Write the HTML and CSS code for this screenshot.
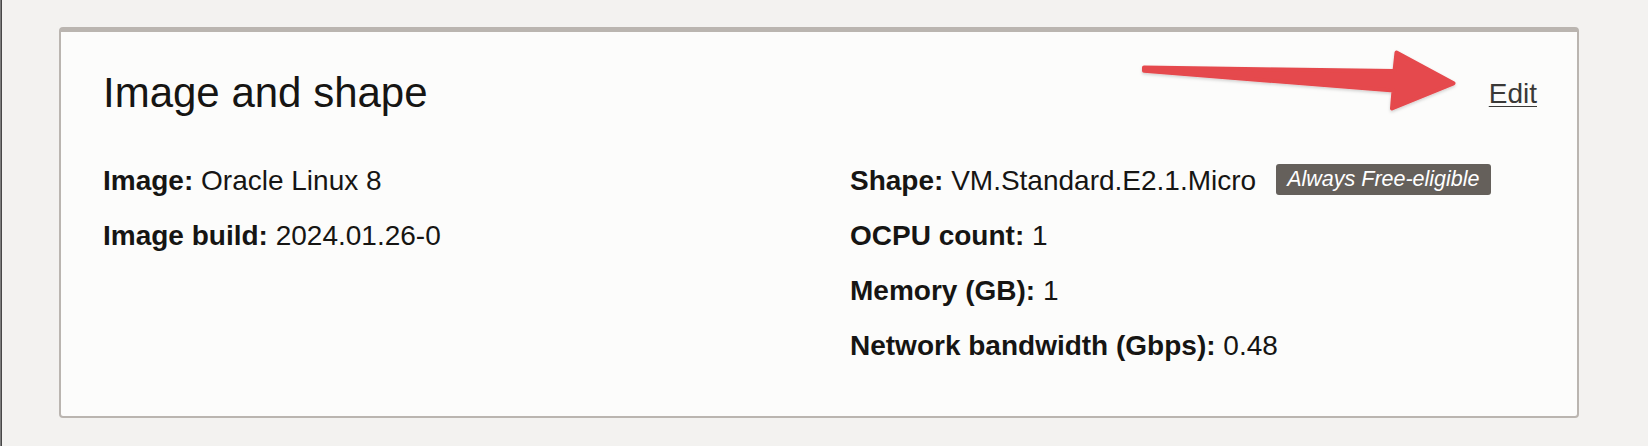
FILE: index.html
```html
<!DOCTYPE html>
<html lang="en">
<head>
<meta charset="utf-8">
<title>Image and shape</title>
<link rel="stylesheet" href="styles.css">
</head>
<body>
<div class="page">
  <section class="card">
    <header class="card-header">
      <h2 class="card-title">Image and shape</h2>
      <a class="edit-link" href="#">Edit</a>
    </header>
    <div class="details">
      <div class="col">
        <div class="row"><span class="label">Image:</span> Oracle Linux 8</div>
        <div class="row"><span class="label">Image build:</span> 2024.01.26-0</div>
      </div>
      <div class="col">
        <div class="row"><span class="label">Shape:</span>&nbsp;VM.Standard.E2.1.Micro<span class="badge">Always Free-eligible</span></div>
        <div class="row"><span class="label">OCPU count:</span> 1</div>
        <div class="row"><span class="label">Memory (GB):</span> 1</div>
        <div class="row"><span class="label">Network bandwidth (Gbps):</span> 0.48</div>
      </div>
    </div>
  </section>
  <svg class="arrow" viewBox="0 0 1648 446" width="1648" height="446" aria-hidden="true">
    <defs>
      <filter id="sh" x="-10%" y="-50%" width="120%" height="200%">
        <feDropShadow dx="0" dy="1.5" stdDeviation="1.5" flood-color="#000" flood-opacity="0.18"/>
      </filter>
    </defs>
    <path filter="url(#sh)" d="M1144,67.6 L1394.5,71 L1396.5,52.5 L1453.5,83.3 L1392,108.5 L1393.5,90.5 L1144,70.8 Z" fill="#e5494d" stroke="#e5494d" stroke-width="4" stroke-linejoin="round"/>
  </svg>
</div>
</body>
</html>
```
FILE: styles.css
```css
* { box-sizing: border-box; }

html, body {
  margin: 0;
  padding: 0;
}

body {
  background: #f3f2f0;
  font-family: "Liberation Sans", Arial, Helvetica, sans-serif;
  color: #161513;
}

.page {
  position: relative;
  width: 1648px;
  height: 446px;
  padding: 27px 0 0 59px;
  background: linear-gradient(to right, #7d7d7d 0, #7d7d7d 1px, #474747 1px, #474747 2px, #f3f2f0 2px);
}

.card {
  width: 1520px;
  height: 391px;
  background: #fcfcfb;
  border: 2px solid #bab5b0;
  border-top-width: 5px;
  border-radius: 4px;
  padding: 37px 40px 0 42px;
}

.card-header {
  display: flex;
  align-items: center;
  justify-content: space-between;
  height: 48px;
  margin-bottom: 48px;
}

.card-title {
  margin: 0;
  font-size: 42px;
  line-height: 48px;
  font-weight: 400;
  color: #161513;
}

.edit-link {
  font-size: 28px;
  line-height: 32px;
  color: #3a3937;
  text-decoration: underline;
  text-decoration-thickness: 1px;
  text-underline-offset: 3px;
  margin-top: 1px;
}

.details {
  display: grid;
  grid-template-columns: 1fr 1fr;
  column-gap: 60px;
}

.col {
  display: flex;
  flex-direction: column;
  gap: 23px;
}

.row {
  display: flex;
  align-items: center;
  height: 32px;
  font-size: 28px;
  line-height: 32px;
  white-space: pre;
}

.label {
  font-weight: 700;
}

.badge {
  display: inline-flex;
  align-items: center;
  height: 31px;
  margin-left: 20px;
  padding: 0 11px;
  background: #65605b;
  color: #ffffff;
  border-radius: 3px;
  font-size: 21.5px;
  font-style: italic;
  line-height: 31px;
  margin-top: -3px;
}

.arrow {
  position: absolute;
  left: 0;
  top: 0;
  pointer-events: none;
}
```
